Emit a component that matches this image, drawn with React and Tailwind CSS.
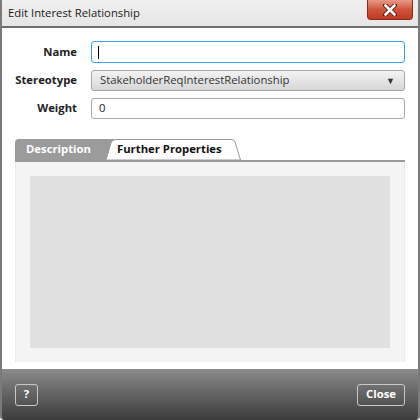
import React from "react";

const font = { fontFamily: '"Open Sans", "Noto Sans", sans-serif' };

export default function App() {
  return (
    <div className="w-[420px] h-[420px] overflow-hidden bg-white relative" style={font}>
      <div className="w-[420px] h-[420px] flex flex-col border-l-2 border-r-2 border-[#7a7a7a] rounded-b-[4px] overflow-hidden">
        {/* title bar */}
        <div className="h-[28px] shrink-0 bg-gradient-to-b from-[#efefef] to-[#e6e6e6] border-b-2 border-[#6f6f6f] flex items-start justify-between relative">
          <div className="pl-[6px] pt-[5px] text-[11.3px] leading-[16px] text-[#1a1a1a]">Edit Interest Relationship</div>
          <div className="mr-[5px] w-[46px] h-[20px] rounded-b-[4px] border border-t-0 border-[#8a2b1e] bg-gradient-to-b from-[#e69a88] via-[#d0543c] to-[#c13a22] flex items-center justify-center">
            <svg width="14" height="12" viewBox="0 0 14 12">
              <path d="M2 1 L12 11 M12 1 L2 11" fill="none" stroke="#5a1a10" strokeWidth="4.5" strokeLinecap="round" />
              <path d="M2.5 1.5 L11.5 10.5 M11.5 1.5 L2.5 10.5" fill="none" stroke="#ffffff" strokeWidth="2.6" strokeLinecap="round" />
            </svg>
          </div>
        </div>

        {/* body */}
        <div className="flex-1 flex flex-col px-[13px] pt-[13px]">
          <div className="grid grid-cols-[62px_1fr] gap-x-[14px] gap-y-[7px] items-center">
            <div className="text-right text-[11.3px] font-bold text-[#222]">Name</div>
            <div className="h-[22px] rounded-[3px] border border-[#3aa0f0] bg-white flex items-center pl-[6px]">
              <div className="w-[1px] h-[13px] bg-black" />
            </div>
            <div className="text-right text-[11.3px] font-bold text-[#222]">Stereotype</div>
            <div className="h-[21px] rounded-[3px] border border-[#a8a8a8] bg-gradient-to-b from-[#f3f3f3] to-[#d6d6d6] flex items-center justify-between pl-[8px] pr-[9px]">
              <span className="text-[11.3px] text-[#333]">StakeholderReqInterestRelationship</span>
              <span className="text-[9px] text-[#333]">▼</span>
            </div>
            <div className="text-right text-[11.3px] font-bold text-[#222]">Weight</div>
            <div className="h-[21px] rounded-[3px] border border-[#a8a8a8] bg-white flex items-center pl-[7px] text-[11.3px] text-[#222]">0</div>
          </div>

          {/* tabs */}
          <div className="mt-[22px] flex items-end h-[21px] border-b-2 border-[#9a9a9a]">
            <div className="w-[100px] h-[21px] bg-[#9b9b9b] rounded-tl-[4px] pl-[11px] text-[11.3px] leading-[20px] font-bold text-white">Description</div>
            <div className="relative -ml-[9px] w-[135px] h-[21px]">
              <svg className="absolute inset-0" width="135" height="21" viewBox="0 0 135 21">
                <path d="M0 21 L5 4 Q6 0.5 10 0.5 L125 0.5 Q128 0.5 129 3 L134.5 21 Z" fill="#ffffff" stroke="#9a9a9a" strokeWidth="1" />
              </svg>
              <div className="relative pl-[11px] text-[11.3px] leading-[20px] font-bold text-[#111]">Further Properties</div>
            </div>
          </div>
          <div className="h-[200px] bg-[#f4f4f4] border-x border-[#ebebeb] px-[14px] pt-[14px] pb-[14px]">
            <div className="h-full bg-[#e1e1e1]" />
          </div>
        </div>

        {/* footer */}
        <div className="h-[51px] shrink-0 bg-gradient-to-b from-[#8c8c8c] to-[#3c3c3c] flex items-center justify-between px-[13px]">
          <div className="w-[23px] h-[22px] rounded-[3px] border border-[#c8c8c8] flex items-center justify-center text-[11.3px] font-bold text-white">?</div>
          <div className="w-[48px] h-[22px] rounded-[3px] border border-[#c8c8c8] flex items-center justify-center text-[11.3px] font-bold text-white">Close</div>
        </div>
      </div>
    </div>
  );
}
